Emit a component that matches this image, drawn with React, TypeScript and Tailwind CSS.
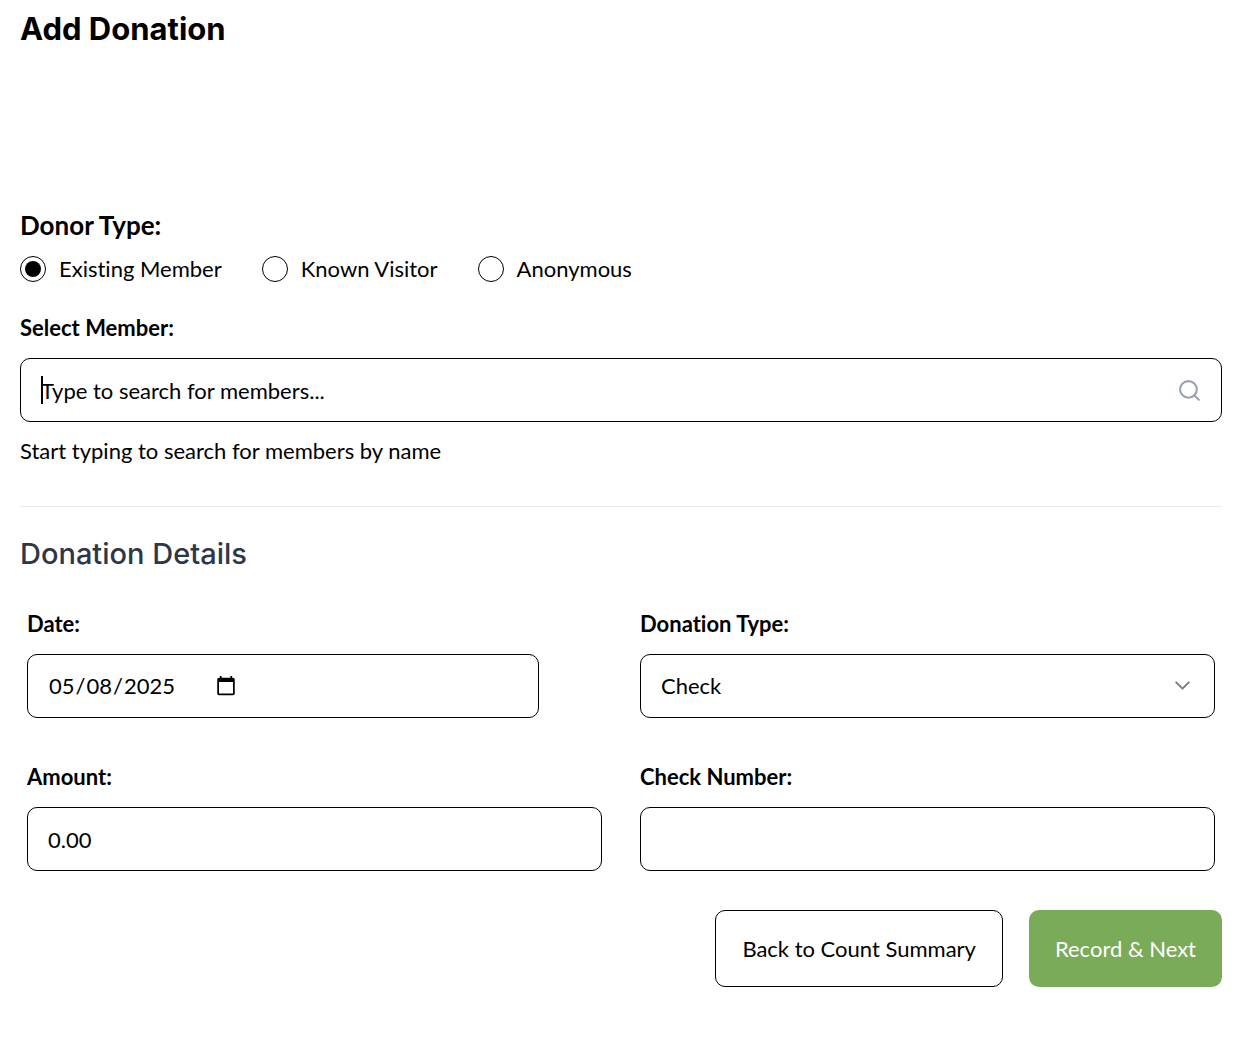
import { useState } from "react";
import type { ReactNode } from "react";
import { Search, ChevronDown } from "lucide-react";

const field =
  "block h-16 w-full rounded-[10px] border border-black bg-white px-5 text-[22px] leading-8 text-black outline-none";

function Field({ id, label, children }: { id: string; label: string; children: ReactNode }) {
  return (
    <div>
      <label htmlFor={id} className="mb-3.5 block text-[22px] leading-8 font-bold">
        {label}
      </label>
      {children}
    </div>
  );
}

const donorTypes = ["Existing Member", "Known Visitor", "Anonymous"];

export default function App() {
  const [donor, setDonor] = useState(donorTypes[0]);
  const [member, setMember] = useState("");
  return (
    <main className="min-h-screen bg-white pt-[9px] pr-6 pb-15 pl-5 font-[Lato,sans-serif] text-[22px] leading-8 text-black [font-variant-ligatures:no-common-ligatures]">
      <h1 className="font-[Inter,sans-serif] text-[31px] leading-10 font-bold">Add Donation</h1>

      <form className="mt-40" onSubmit={(e) => e.preventDefault()}>
        <fieldset>
          <legend className="text-[26px] leading-8 font-bold">Donor Type:</legend>
          <div className="mt-3 flex flex-wrap gap-x-10 gap-y-3">
            {donorTypes.map((type) => (
              <label key={type} className="flex items-center gap-[13px] whitespace-nowrap">
                <input
                  type="radio"
                  name="donor"
                  checked={donor === type}
                  onChange={() => setDonor(type)}
                  className="grid size-[26px] shrink-0 appearance-none place-items-center rounded-full border border-black before:size-4 before:rounded-full checked:before:bg-black"
                />
                {type}
              </label>
            ))}
          </div>
        </fieldset>

        <div className="mt-[27px]">
          <Field id="member" label="Select Member:">
            <div className="relative">
              <input
                id="member"
                type="text"
                value={member}
                onChange={(e) => setMember(e.target.value)}
                placeholder="Type to search for members..."
                className={`${field} pr-16 placeholder:text-black placeholder:opacity-100`}
              />
              {member === "" && (
                <span aria-hidden="true" className="pointer-events-none absolute top-[18px] left-[21px] h-7 w-0.5 bg-black" />
              )}
              <Search
                aria-hidden="true"
                strokeWidth={2}
                className="pointer-events-none absolute top-5 right-5 size-[25px] text-gray-400"
              />
            </div>
          </Field>
          <p className="mt-[13px]">Start typing to search for members by name</p>
        </div>

        <hr className="mt-[39px] border-[#e8ebef]" />

        <h2 className="mt-[27px] font-[Inter,sans-serif] text-[29px] leading-10 font-medium text-[#2d3748]">
          Donation Details
        </h2>

        <div className="mx-[7px] mt-[34px] grid grid-cols-2 gap-x-[38px] gap-y-[43px]">
          <Field id="date" label="Date:">
            <div className="flex h-16 w-[512px] max-w-full items-center rounded-[10px] border border-black px-5">
              <input
                id="date"
                type="date"
                defaultValue="2025-05-08"
                className="bg-transparent text-[22px] leading-8 outline-none"
              />
            </div>
          </Field>
          <Field id="type" label="Donation Type:">
            <div className="relative">
              <select id="type" defaultValue="Check" className={`${field} appearance-none`}>
                <option>Check</option>
                <option>Cash</option>
              </select>
              <ChevronDown
                aria-hidden="true"
                className="pointer-events-none absolute top-[19px] right-5 size-[25px] text-[#808080]"
              />
            </div>
          </Field>
          <Field id="amount" label="Amount:">
            <input id="amount" type="text" inputMode="decimal" defaultValue="0.00" className={field} />
          </Field>
          <Field id="number" label="Check Number:">
            <input id="number" type="text" className={field} />
          </Field>
        </div>

        <div className="mt-[39px] flex flex-wrap justify-end gap-[26px]">
          <button type="button" className="h-[77px] rounded-[10px] border border-black px-[26px]">
            Back to Count Summary
          </button>
          <button type="submit" className="h-[77px] rounded-[10px] bg-[#7aab59] px-[26px] text-white">
            Record &amp; Next
          </button>
        </div>
      </form>
    </main>
  );
}
